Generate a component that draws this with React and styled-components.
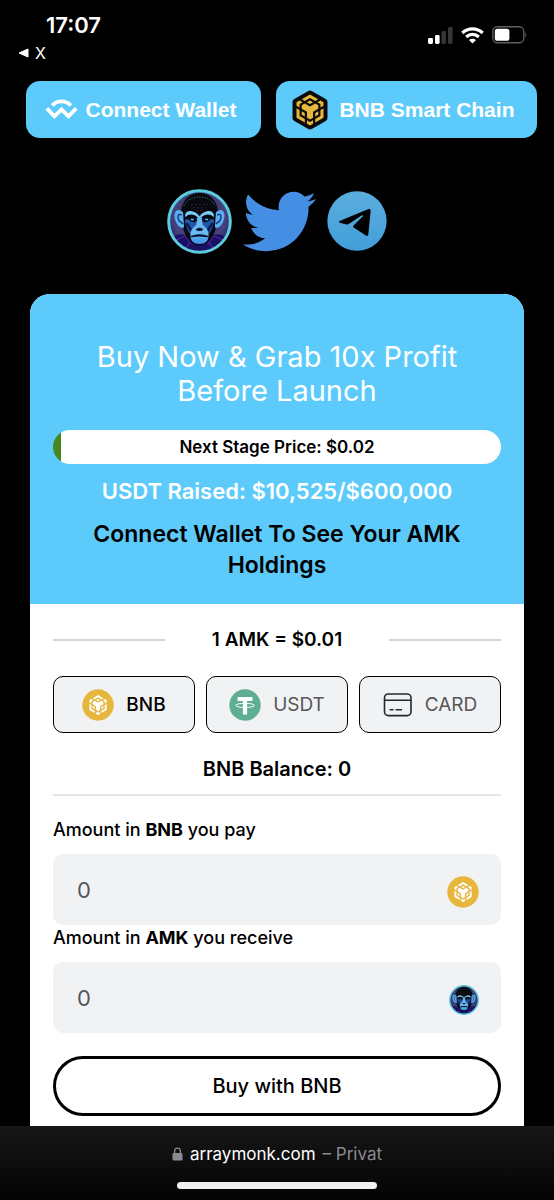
import React, { useState } from "react";
import styled, { createGlobalStyle } from "styled-components";
import { FaTwitter } from "react-icons/fa";

const GlobalStyle = createGlobalStyle`
  * {
    box-sizing: border-box;
  }
  body {
    margin: 0;
    background-color: #000;
    font-family: Inter, "Noto Sans", sans-serif;
    color: #000;
  }
  h1, h2, p {
    margin: 0;
  }
`;

const Page = styled.div`
  display: flex;
  flex-direction: column;
  min-height: 100vh;
`;

const StatusBar = styled.div`
  display: flex;
  justify-content: space-between;
  padding: 11px 26px 0 18px;
  height: 81px;
  color: #fff;
`;

const Time = styled.div`
  padding-left: 28px;
  font-size: 22px;
  font-weight: 600;
  line-height: 28px;
`;

const BackLink = styled.a`
  display: flex;
  align-items: center;
  gap: 6px;
  color: #fff;
  font-size: 16px;
  line-height: 28px;
  text-decoration: none;
`;

const StatusIcons = styled.div`
  display: flex;
  align-items: center;
  gap: 8px;
  height: 48px;
`;

const Header = styled.header`
  display: grid;
  grid-template-columns: 9fr 10fr;
  gap: 15px;
  padding: 0 17px 0 26px;
`;

const HeaderButton = styled.button`
  display: flex;
  align-items: center;
  justify-content: center;
  gap: ${(props) => props.$gap};
  height: 57px;
  padding: 0 6px 0 0;
  border: none;
  border-radius: 14px;
  background-color: #5ccbfb;
  color: #fff;
  font-family: "Liberation Sans", Arial, sans-serif;
  font-size: 21px;
  font-weight: bold;
  white-space: nowrap;
  cursor: pointer;
`;

const Socials = styled.nav`
  display: flex;
  align-items: center;
  justify-content: center;
  gap: 11px;
  height: 156px;
  padding-top: 10px;

  a {
    display: flex;
    color: #448ee4;
  }
`;

const Card = styled.main`
  flex: 1;
  margin: 0 30px;
  border-radius: 20px 20px 0 0;
  background-color: #fff;
  overflow: hidden;
  text-align: center;
`;

const Promo = styled.section`
  padding: 46px 23px 24px;
  background-color: #5ccbfb;
`;

const Title = styled.h1`
  color: #fff;
  font-size: 29px;
  font-weight: 400;
  line-height: 34px;
`;

const Progress = styled.div`
  height: 34px;
  margin: 22px 0 12px;
  border-radius: 17px;
  overflow: hidden;
  background: linear-gradient(to right, #46881f 8px, #fff 8px);
  font-size: 17px;
  font-weight: 600;
  line-height: 34px;
`;

const PromoLine = styled.h2`
  color: ${(props) => props.$color};
  font-size: 22px;
  font-weight: 600;
  line-height: 31px;
`;

const Holdings = styled(PromoLine)`
  margin-top: 12px;
  margin-bottom: -1px;
  font-size: 23px;
`;

const Body = styled.section`
  padding: 20px 23px 10px;
`;

const Rate = styled.div`
  display: grid;
  grid-template-columns: 1fr 2fr 1fr;
  align-items: center;
  font-size: 19px;
  font-weight: 600;
  line-height: 32px;

  hr {
    width: 100%;
    margin: 0;
    border: none;
    border-top: 2px solid #d5d6d8;
  }
`;

const Tabs = styled.div`
  display: grid;
  grid-template-columns: repeat(3, 1fr);
  gap: 11px;
  margin: 20px 0;
`;

const Tab = styled.button`
  display: flex;
  align-items: center;
  justify-content: center;
  gap: 12px;
  height: 57px;
  padding: 0;
  border: 1px solid #000;
  border-radius: 10px;
  background-color: #f1f2f4;
  color: ${(props) => (props.$active ? "#000" : "#55575a")};
  font-family: inherit;
  font-size: 19px;
  font-weight: ${(props) => (props.$active ? 500 : 400)};
  cursor: pointer;
`;

const Balance = styled.p`
  padding-bottom: 9px;
  border-bottom: 2px solid #e4e5e7;
  font-size: 20px;
  font-weight: 600;
  line-height: 32px;
`;

const Form = styled.form`
  margin-top: 21px;
  text-align: left;
`;

const Label = styled.label`
  display: block;
  font-size: 18px;
  font-weight: 500;
  line-height: 25px;
`;

const Field = styled.div`
  display: flex;
  align-items: center;
  height: 71px;
  margin: 12px 0 0;
  padding: 4px 22px 0 24px;
  border-radius: 10px;
  background-color: #f1f2f4;

  input {
    flex: 1;
    min-width: 0;
    padding: 0 0 4px;
    border: none;
    outline: none;
    background: none;
    color: #55575a;
    font-family: inherit;
    font-size: 22px;
  }
`;

const BuyButton = styled.button`
  width: 100%;
  height: 60px;
  margin-top: 23px;
  border: 3px solid #000;
  border-radius: 30px;
  background-color: #fff;
  color: #000;
  font-family: inherit;
  font-size: 20px;
  font-weight: 500;
  cursor: pointer;
`;

const AddressBar = styled.footer`
  display: flex;
  flex-direction: column;
  align-items: center;
  justify-content: space-between;
  height: 74px;
  padding: 16px 0 11px;
  background: linear-gradient(#161616, #040404);
  font-size: 17px;
  line-height: 24px;
  color: #8a8a90;
`;

const Address = styled.div`
  display: flex;
  align-items: center;
  gap: 7px;

  b {
    color: #fff;
    font-weight: 400;
  }
`;

const HomeIndicator = styled.div`
  width: 36%;
  height: 7px;
  border-radius: 4px;
  background-color: #f0f0f0;
`;

const bnbPath =
  "M5.631 3.676 12.001 0l6.367 3.676-2.34 1.358L12 2.716 7.972 5.034l-2.34-1.358Zm12.737 4.636-2.34-1.358L12 9.272 7.972 6.954l-2.34 1.358v2.716l4.026 2.318v4.636L12 19.341l2.341-1.359v-4.636l4.027-2.318V8.312Zm0 7.352v-2.716l-2.34 1.358v2.716l2.34-1.358Zm1.663.96-4.027 2.318v2.717l6.368-3.677V10.63l-2.34 1.358v4.636Zm-2.34-10.63 2.34 1.358v2.716l2.341-1.358V5.994l-2.34-1.358-2.342 1.358ZM9.657 19.926v2.716L12 24l2.341-1.358v-2.716L12 21.284l-2.342-1.358Zm-4.027-4.262 2.341 1.358v-2.716l-2.34-1.358v2.716Zm4.027-9.67L12 7.352l2.342-1.358L12 4.636 9.658 5.994Zm-5.69 1.358 2.341-1.358-2.34-1.358-2.342 1.358v2.716l2.341 1.358V7.352Zm0 4.636L1.627 10.63v7.354l6.368 3.677v-2.717l-4.027-2.318v-4.636Z";

const BnbCoin = () => (
  <svg width="32" height="32" viewBox="0 0 32 32">
    <circle cx="16" cy="16" r="15.7" fill="#e7b63c" />
    <path d={bnbPath} transform="translate(6.1 6.1) scale(.83)" fill="#fff" />
  </svg>
);

const BnbChain = () => (
  <svg width="36" height="40" viewBox="0 0 36 40">
    <path
      d="M18 4 L32 12 V28 L18 36 L4 28 V12 Z"
      fill="#0b0b0b"
      stroke="#0b0b0b"
      strokeWidth="7"
      strokeLinejoin="round"
    />
    <path d={bnbPath} transform="translate(2.4 4.4) scale(1.3)" fill="#e7b63c" />
  </svg>
);

const WalletConnect = () => (
  <svg width="33" height="22" viewBox="0 0 33 22" fill="none" stroke="#fff" strokeWidth="3.8">
    <path d="M7.2 6.4 C12 .9 21 .9 25.8 6.4" />
    <path d="M1.8 9.4 L9.5 17.4 L16.5 10.4 L23.5 17.4 L31.2 9.4" />
  </svg>
);

const Tether = () => (
  <svg width="32" height="32" viewBox="0 0 32 32">
    <circle cx="16" cy="16" r="15.7" fill="#5fae94" />
    <path d="M8.6 8 H23.4 V12 H18.1 V25.6 H13.9 V12 H8.6 Z" fill="#fff" />
    <ellipse cx="16" cy="16.4" rx="9.4" ry="2.1" fill="none" stroke="#fff" strokeWidth="1" />
  </svg>
);

const CreditCard = () => (
  <svg width="30" height="26" viewBox="0 0 30 26" fill="none" stroke="#24282c" strokeWidth="1.6">
    <rect x="1.5" y="2" width="26.5" height="21.6" rx="3.8" />
    <path d="M1.5 8.2 H28 M6.6 17.8 H10.6 M12.6 17.8 H19" />
  </svg>
);

const Telegram = () => (
  <svg width="60" height="60" viewBox="0 0 176 176">
    <defs>
      <linearGradient id="sky" x1="0" y1="0" x2="0" y2="1">
        <stop offset="0" stopColor="#5badde" />
        <stop offset="1" stopColor="#429fda" />
      </linearGradient>
    </defs>
    <circle cx="88" cy="88" r="87" fill="url(#sky)" />
    <path
      d="M37 88 L122 53 Q129 51 128 58 L121 128 Q119 134 113 130 L78 107 Q75 104 78 101 L106 73 Q104 70 101 72 L64 97 Q61 99 57 98 L38 93 Q32 91 37 88 Z"
      fill="#000"
    />
  </svg>
);

const Monkey = ({ size, id }) => (
  <svg width={size} height={size} viewBox="12 8 194 194">
    <defs>
      <radialGradient id={`${id}-bg`} cx=".5" cy=".4" r=".6">
        <stop offset="0" stopColor="#26264e" />
        <stop offset=".7" stopColor="#454280" />
        <stop offset="1" stopColor="#242263" />
      </radialGradient>
      <linearGradient id={`${id}-face`} x1="0" y1="0" x2="0" y2="1">
        <stop offset="0" stopColor="#6cb4ee" />
        <stop offset=".6" stopColor="#69bdf2" />
        <stop offset="1" stopColor="#3f8fe6" />
      </linearGradient>
    </defs>
    <circle cx="109" cy="105" r="92" fill={`url(#${id}-bg)`} />
    <path d="M34 150 C55 138 70 140 109 172 C148 140 163 138 184 150 C167 184 142 197 109 197 C76 197 51 184 34 150 Z" fill="#1b0f63" />
    <path d="M40 160 L66 148 L84 172 M178 160 L152 148 L134 172 M70 184 L80 168 M148 184 L138 168" fill="none" stroke="#4c29a5" strokeWidth="3" />
    <path d="M54 86 C52 42 80 20 109 20 C138 20 166 42 164 86 L156 132 C148 156 130 176 109 176 C88 176 70 156 62 132 Z" fill="#07090f" />
    <path d="M60 78 C40 58 28 82 38 104 C43 118 54 128 63 122 Z M158 78 C178 58 190 82 180 104 C175 118 164 128 155 122 Z" fill="#5aaef0" />
    <path d="M56 86 C44 78 42 92 48 103 L60 112 M162 86 C174 78 176 92 170 103 L158 112" fill="none" stroke="#12306e" strokeWidth="4" />
    <path d="M62 58 C74 36 94 32 109 32 C124 32 144 36 156 58" fill="none" stroke="#3d7f8c" strokeWidth="3" strokeDasharray="3 5" />
    <path d="M84 54 H134 M90 64 H128 M100 73 H118" stroke="#49333f" strokeWidth="3" strokeDasharray="4 8" />
    <path d="M66 100 C74 96 94 100 102 94 H116 C124 100 144 96 152 100 C152 120 142 136 136 142 H82 C76 136 66 120 66 100 Z" fill="#2456a8" />
    <path d="M66 92 C64 70 88 68 107 86 L104 93 C94 83 79 80 66 92 Z M152 92 C154 70 130 68 111 86 L114 93 C124 83 139 80 152 92 Z" fill="#78cdf6" />
    <path d="M74 94 C84 88 96 92 102 99 L97 107 C86 108 78 104 74 94 Z M144 94 C134 88 122 92 116 99 L121 107 C132 108 140 104 144 94 Z" fill="#050916" />
    <path d="M83 99 H92 M126 99 H135" stroke="#6bb8f4" strokeWidth="4" />
    <path d="M70 110 L86 134 M148 110 L132 134" stroke="#0b1d50" strokeWidth="8" />
    <path d="M104 88 H114 L119 116 C128 122 136 130 136 146 C136 164 126 172 109 172 C92 172 82 164 82 146 C82 130 90 122 99 116 Z" fill={`url(#${id}-face)`} />
    <path d="M97 128 L106 124 H112 L121 128 L115 133 H103 Z" fill="#0a1736" />
    <path d="M84 150 Q109 140 134 150 Q109 146 84 150 Z" fill="#07112c" stroke="#07112c" strokeWidth="4" />
    <circle cx="109" cy="105" r="92" fill="none" stroke="#5ccbdd" strokeWidth="9" />
  </svg>
);

const tabs = [
  { name: "BNB", icon: <BnbCoin /> },
  { name: "USDT", icon: <Tether /> },
  { name: "CARD", icon: <CreditCard /> },
];

const App = () => {
  const [active, setActive] = useState("BNB");
  const [pay, setPay] = useState("0");
  const [receive, setReceive] = useState("0");

  return (
    <Page>
      <GlobalStyle />
      <StatusBar>
        <div>
          <Time>17:07</Time>
          <BackLink href="#">
            <svg width="11" height="10" viewBox="0 0 11 10">
              <path d="M1 5 L10 1 V9 Z" fill="#fff" stroke="#fff" strokeLinejoin="round" />
            </svg>
            X
          </BackLink>
        </div>
        <StatusIcons>
          <svg width="25" height="17" viewBox="0 0 25 17">
            <rect x="0" y="11" width="5" height="6" rx="1.4" fill="#fff" />
            <rect x="7" y="8" width="4.6" height="9" rx="1.4" fill="#fff" />
            <rect x="13.4" y="4" width="4.6" height="13" rx="1.4" fill="#363636" />
            <rect x="20" y="0" width="4.6" height="17" rx="1.4" fill="#363636" />
          </svg>
          <svg width="23" height="17" viewBox="0 0 23 17" fill="none" stroke="#fff" strokeWidth="3.2">
            <path d="M1.3 6 C7 .4 16 .4 21.7 6" />
            <path d="M5.2 10 C8.8 6.6 14.2 6.6 17.8 10" />
            <path d="M11.5 16.6 L8 13 C10 11.4 13 11.4 15 13 Z" fill="#fff" stroke="none" />
          </svg>
          <svg width="36" height="18" viewBox="0 0 36 18">
            <rect x=".8" y=".8" width="31" height="16" rx="4.6" fill="none" stroke="#5e5e5e" strokeWidth="1.4" />
            <rect x="2.8" y="2.8" width="14.6" height="12" rx="2.6" fill="#fff" />
            <path d="M33.4 6 Q35.4 9 33.4 12 Z" fill="#5e5e5e" />
          </svg>
        </StatusIcons>
      </StatusBar>

      <Header>
        <HeaderButton $gap="8px">
          <WalletConnect />
          Connect Wallet
        </HeaderButton>
        <HeaderButton $gap="11px">
          <BnbChain />
          BNB Smart Chain
        </HeaderButton>
      </Header>

      <Socials>
        <a href="#" aria-label="ArrayMonk">
          <Monkey size={65} id="logo" />
        </a>
        <a href="#" aria-label="Twitter">
          <FaTwitter size={73} />
        </a>
        <a href="#" aria-label="Telegram">
          <Telegram />
        </a>
      </Socials>

      <Card>
        <Promo>
          <Title>
            Buy Now & Grab 10x Profit
            <br />
            Before Launch
          </Title>
          <Progress>Next Stage Price: $0.02</Progress>
          <PromoLine $color="#fff">USDT Raised: $10,525/$600,000</PromoLine>
          <Holdings $color="#000">
            Connect Wallet To See Your AMK
            <br />
            Holdings
          </Holdings>
        </Promo>

        <Body>
          <Rate>
            <hr />
            <span>1 AMK = $0.01</span>
            <hr />
          </Rate>
          <Tabs>
            {tabs.map((tab) => (
              <Tab
                key={tab.name}
                type="button"
                $active={tab.name === active}
                onClick={() => setActive(tab.name)}
              >
                {tab.icon}
                {tab.name}
              </Tab>
            ))}
          </Tabs>
          <Balance>BNB Balance: 0</Balance>
          <Form onSubmit={(e) => e.preventDefault()}>
            <Label htmlFor="pay">
              Amount in <b>BNB</b> you pay
            </Label>
            <Field>
              <input id="pay" value={pay} onChange={(e) => setPay(e.target.value)} />
              <BnbCoin />
            </Field>
            <Label htmlFor="receive">
              Amount in <b>AMK</b> you receive
            </Label>
            <Field>
              <input
                id="receive"
                value={receive}
                onChange={(e) => setReceive(e.target.value)}
              />
              <Monkey size={30} id="coin" />
            </Field>
            <BuyButton type="submit">Buy with BNB</BuyButton>
          </Form>
        </Body>
      </Card>

      <AddressBar>
        <Address>
          <svg width="11" height="14" viewBox="0 0 11 14">
            <rect x=".5" y="6" width="10" height="7.6" rx="1.4" fill="#8a8a90" />
            <path d="M2.6 6.4 V4 a2.9 2.9 0 0 1 5.8 0 V6.4" fill="none" stroke="#8a8a90" strokeWidth="1.3" />
          </svg>
          <b>arraymonk.com</b>
          <span>– Privat</span>
        </Address>
        <HomeIndicator />
      </AddressBar>
    </Page>
  );
};

export default App;
